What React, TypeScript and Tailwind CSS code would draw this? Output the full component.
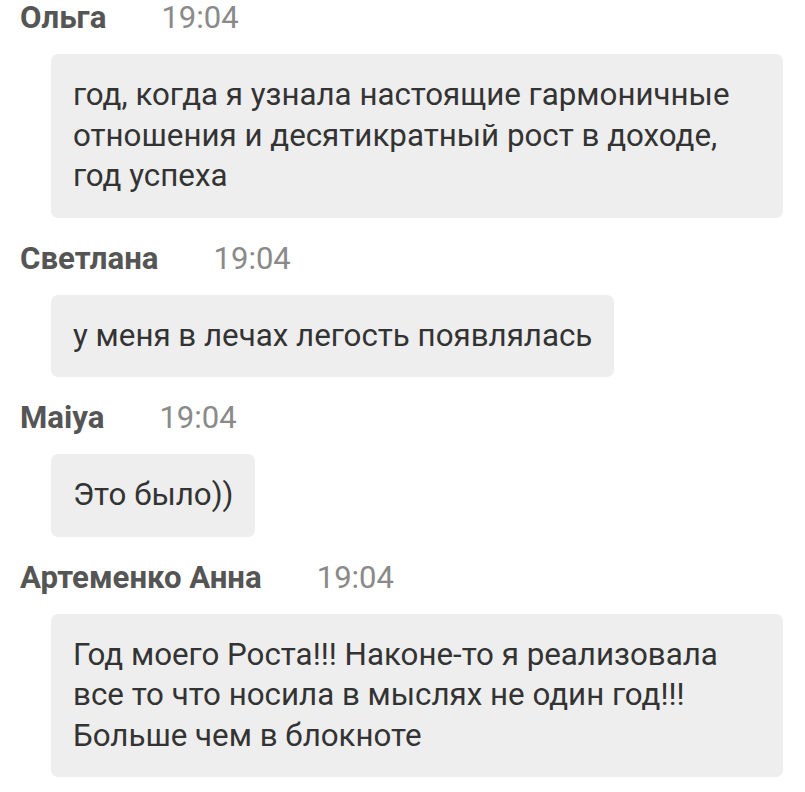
import React from 'react';

type Message = {
  author: string;
  time: string;
  lines: string[];
  full?: boolean;
};

const MESSAGES: Message[] = [
  {
    author: 'Ольга',
    time: '19:04',
    lines: [
      'год, когда я узнала настоящие гармоничные',
      'отношения и десятикратный рост в доходе,',
      'год успеха',
    ],
    full: true,
  },
  { author: 'Светлана', time: '19:04', lines: ['у меня в лечах легость появлялась'] },
  { author: 'Maiya', time: '19:04', lines: ['Это было))'] },
  {
    author: 'Артеменко Анна',
    time: '19:04',
    lines: [
      'Год моего Роста!!! Наконе-то я реализовала',
      'все то что носила в мыслях не один год!!!',
      'Больше чем в блокноте',
    ],
    full: true,
  },
];

const ChatMessage: React.FC<{ msg: Message }> = ({ msg }) => (
  <div className="flex flex-col">
    {/* Author + time */}
    <div className="flex items-baseline h-[36px] leading-[36px] pl-[20px]">
      <span className="text-[31.2px] font-bold text-[#555555]">{msg.author}</span>
      <span className="ml-[55px] text-[31px] text-[#8a8a8a]">{msg.time}</span>
    </div>

    {/* Bubble */}
    <div className="pl-[51px] pr-[22px] mt-[18px]">
      <div
        className={
          msg.full
            ? 'rounded-[7px] bg-[#eeeeee] px-[22px] py-[21px] text-[31.3px] leading-[40.5px] text-[#333333]'
            : 'w-fit rounded-[7px] bg-[#eeeeee] px-[22px] py-[21px] text-[31.3px] leading-[40.5px] text-[#333333]'
        }
      >
        {msg.lines.map((line, i) => (
          <div key={i} className="whitespace-nowrap">
            {line}
          </div>
        ))}
      </div>
    </div>
  </div>
);

export default function App() {
  return (
    <main
      className="min-h-screen w-[805px] bg-white flex flex-col gap-[23px]"
      style={{ fontFamily: 'Roboto, "Noto Sans", sans-serif' }}
    >
      {MESSAGES.map((m, i) => (
        <ChatMessage key={i} msg={m} />
      ))}
    </main>
  );
}
